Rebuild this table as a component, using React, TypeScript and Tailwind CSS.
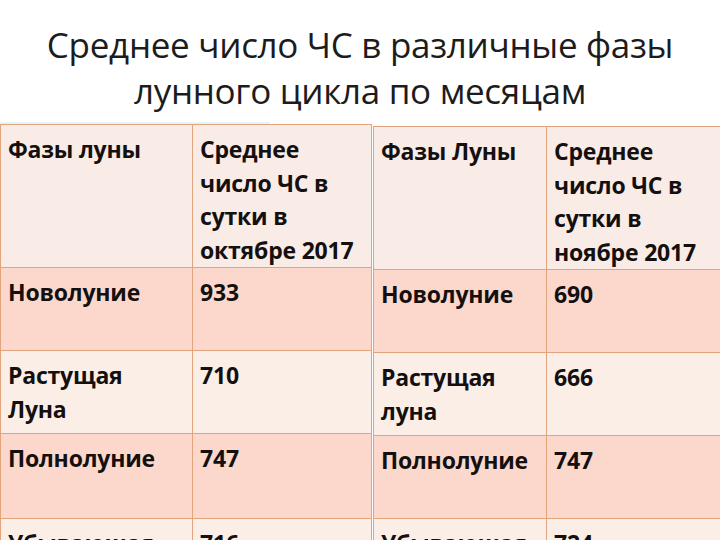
import React from 'react'

type Row = { phase: React.ReactNode; value: React.ReactNode; bg: string; h: string }

const cell = 'border border-[#e2a47c] align-top pl-[7px] pr-1 pt-[8px] pb-0 whitespace-nowrap'

function PhaseTable({ rows, widths, className }: { rows: Row[]; widths: [string, string]; className: string }) {
  return (
    <table className={`table-fixed border-collapse shrink-0 ${className}`}>
      <colgroup>
        <col className={widths[0]} />
        <col className={widths[1]} />
      </colgroup>
      <tbody>
        {rows.map((r, i) => (
          <tr key={i} className={`${r.bg} ${r.h}`}>
            <td className={cell}>{r.phase}</td>
            <td className={cell}>{r.value}</td>
          </tr>
        ))}
      </tbody>
    </table>
  )
}

export default function App() {
  const light = 'bg-[#fbeee7]'
  const pink = 'bg-[#fcd8cc]'
  const head = 'bg-[#f9ebe5]'

  const left: Row[] = [
    {
      phase: 'Фазы луны',
      value: (
        <>
          Среднее
          <br />
          число ЧС в
          <br />
          сутки в
          <br />
          октябре 2017
        </>
      ),
      bg: head,
      h: 'h-[142px]',
    },
    { phase: 'Новолуние', value: '933', bg: pink, h: 'h-[83px]' },
    {
      phase: (
        <>
          Растущая
          <br />
          Луна
        </>
      ),
      value: '710',
      bg: light,
      h: 'h-[83px]',
    },
    { phase: 'Полнолуние', value: '747', bg: pink, h: 'h-[85px]' },
    { phase: 'Убывающая', value: '716', bg: light, h: 'h-[60px]' },
  ]

  const right: Row[] = [
    {
      phase: 'Фазы Луны',
      value: (
        <>
          Среднее
          <br />
          число ЧС в
          <br />
          сутки в
          <br />
          ноябре 2017
        </>
      ),
      bg: head,
      h: 'h-[141px]',
    },
    { phase: 'Новолуние', value: '690', bg: pink, h: 'h-[83px]' },
    {
      phase: (
        <>
          Растущая
          <br />
          луна
        </>
      ),
      value: '666',
      bg: light,
      h: 'h-[82px]',
    },
    { phase: 'Полнолуние', value: '747', bg: pink, h: 'h-[83px]' },
    { phase: 'Убывающая', value: '724', bg: light, h: 'h-[60px]' },
  ]

  return (
    <div className="w-[720px] h-[540px] overflow-hidden bg-white flex flex-col" style={{ fontFamily: '"Open Sans", "Noto Sans", sans-serif' }}>
      {/* title */}
      <div className="shrink-0 h-[122px] pt-[22px] text-center text-[35px] leading-[46px] tracking-[-0.3px] text-[#1c1c1c]">
        Среднее число ЧС в различные фазы
        <br />
        лунного цикла по месяцам
      </div>
      <div className="shrink-0 h-[2px] w-[270px] bg-[#e4f5fa]" />

      {/* tables */}
      <div className="shrink-0 flex gap-[1px] text-[23px] leading-[33.5px] font-bold tracking-[-0.2px] text-[#141010]">
        <PhaseTable rows={left} widths={['w-[192px]', 'w-[179px]']} className="w-[371px]" />
        <PhaseTable rows={right} widths={['w-[173px]', 'w-[190px]']} className="w-[363px] mt-[2px]" />
      </div>
    </div>
  )
}
